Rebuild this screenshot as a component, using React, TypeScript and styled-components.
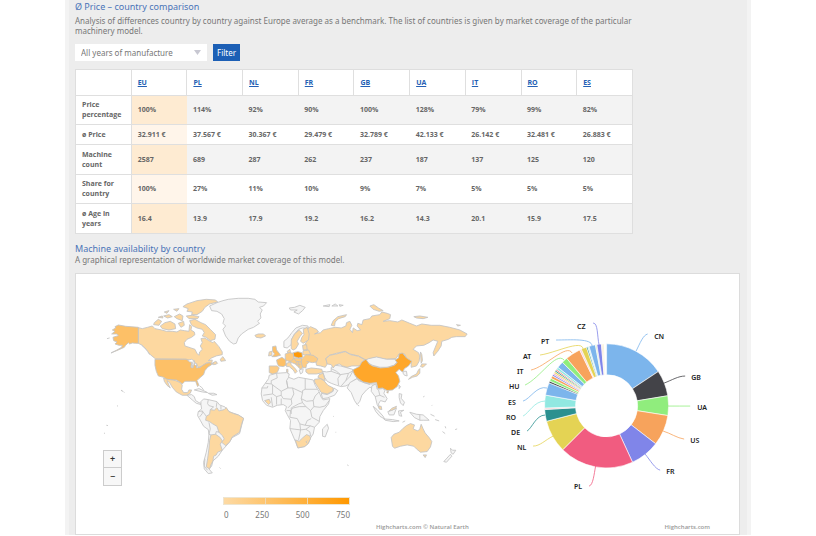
import React from "react";
import styled, { createGlobalStyle } from "styled-components";

const GlobalStyle = createGlobalStyle`
  * { box-sizing: border-box; }
  body {
    margin: 0;
    background: #fff;
    color: #777;
    font-family: "Noto Sans", "Open Sans", sans-serif;
    font-size: 8px;
    line-height: 10px;
  }
`;

const Page = styled.main`
  max-width: 686px;
  margin: 0 auto;
  padding: 0 7px 0 6px;
  background: #ededed;
  border-left: 4px solid #f3f3f3;
  border-right: 4px solid #f3f3f3;
`;

const Section = styled.section`
  display: flow-root;

  & + & { margin-top: 8px; }
`;

const Title = styled.h2`
  margin: 0;
  color: #4a74b8;
  font-size: 9px;
  font-weight: 400;
  line-height: 13px;
`;

const Lead = styled.p<{ $gap: number }>`
  margin: ${(p) => p.$gap}px 0 0;
  max-width: 566px;
`;

const Filters = styled.form`
  display: flex;
  gap: 6px;
  margin: 8px 0;
`;

const SelectBox = styled.label`
  position: relative;
  width: 132px;
  height: 17px;
`;

const YearSelect = styled.select`
  appearance: none;
  width: 100%;
  height: 100%;
  padding: 0 20px 0 6px;
  border: 0;
  border-radius: 0;
  background: #fff;
  color: #777;
  font: inherit;
`;

const Arrow = styled.svg`
  position: absolute;
  right: 6px;
  top: 6px;
  width: 7px;
  height: 5px;
  pointer-events: none;
`;

const FilterButton = styled.button`
  padding: 0 4px;
  border: 0;
  background: #1c5fb5;
  color: #fff;
  font: inherit;
`;

const Table = styled.table`
  width: 558px;
  max-width: 100%;
  table-layout: fixed;
  border-collapse: collapse;
  border: 1px solid #dedede;
  background: #fff;
  color: #666;
  font-family: "Open Sans", "Noto Sans", sans-serif;
  font-size: 7px;
  font-weight: 700;
`;

const Row = styled.tr<{ $h: number; $shaded?: boolean }>`
  height: ${(p) => p.$h}px;
  border-bottom: 1px solid #dfdfdf;
  background: ${(p) => (p.$shaded ? "#f3f3f3" : "#fff")};
`;

const HeadCell = styled.th`
  padding: 0 6px;
  border-right: 1px solid #dfdfdf;
  text-align: left;
`;

const RowHead = styled(HeadCell)`
  background: #fff;
`;

const Cell = styled.td<{ $tint?: string }>`
  padding: 0 0 0 6px;
  white-space: nowrap;
  background: ${(p) => p.$tint ?? "transparent"};
`;

const CountryLink = styled.a`
  color: #2460b4;
`;

const Charts = styled.div`
  display: grid;
  grid-template-columns: 3fr 2fr;
  min-height: 262px;
  margin-top: 8px;
  border: 1px solid #dcdcdc;
  background: #fff;
`;

const ChartColumn = styled.figure<{ $top: number; $right: number }>`
  position: relative;
  display: flex;
  flex-direction: column;
  margin: 0;
  padding: ${(p) => p.$top}px 0 2px;
  min-width: 0;

  figcaption {
    margin-top: auto;
    padding-right: ${(p) => p.$right}px;
    text-align: right;
    color: #999;
    font-family: "Open Sans", sans-serif;
    font-size: 6px;
    font-weight: 600;
  }
`;

const Drawing = styled.svg`
  display: block;
  width: 100%;
  height: auto;
`;

const ZoomControls = styled.div`
  position: absolute;
  left: 27px;
  bottom: 48px;
  display: grid;
  width: 19px;
`;

const ZoomButton = styled.button`
  height: 18px;
  padding: 0;
  border: 1px solid #ccc;
  background: #f7f7f7;
  color: #333;
  font: 600 9px/10px "Noto Sans", sans-serif;
  & + & { border-top: 0; }
`;

const Legend = styled.div`
  width: 127px;
  margin: 13px 0 0 147px;
`;

const LegendBar = styled.div`
  height: 8px;
  border: 1px solid #eee5d0;
  background:
    linear-gradient(90deg, transparent 41px, #eed9b5 41px, #eed9b5 42px, transparent 42px, transparent 83px, #eed9b5 83px, #eed9b5 84px, transparent 84px),
    linear-gradient(90deg, #fddaa4, #ff9800);
`;

const LegendScale = styled.div`
  display: flex;
  justify-content: space-between;
  margin-top: 5px;
  padding-left: 1px;
  font-size: 8px;
`;

const countries = ["EU", "PL", "NL", "FR", "GB", "UA", "IT", "RO", "ES"];

const rows = [
  { name: "Price percentage", h: 29, values: ["100%", "114%", "92%", "90%", "100%", "128%", "79%", "99%", "82%"] },
  { name: "ø Price", h: 20, values: ["32.911 €", "37.567 €", "30.367 €", "29.479 €", "32.789 €", "42.133 €", "26.142 €", "32.481 €", "26.883 €"] },
  { name: "Machine count", h: 30, values: ["2587", "689", "287", "262", "237", "187", "137", "125", "120"] },
  { name: "Share for country", h: 29, values: ["100%", "27%", "11%", "10%", "9%", "7%", "5%", "5%", "5%"] },
  { name: "ø Age in years", h: 30, values: ["16.4", "13.9", "17.9", "19.2", "16.2", "14.3", "20.1", "15.9", "17.5"] },
];

const NONE = "#f5f5f5";
const LOW = "#fdd8a0";
const SOME = "#fdcc84";
const MID = "#fdc067";
const HIGH = "#ffa72a";
const TOP = "#ff9a08";

type Shape = [fill: string, d: string];

const northAmerica: Shape[] = [
  [LOW, "M130 131 142 134 158 130 172 126 180 134 200 138 214 142 232 142 246 144 256 138 268 140 282 142 284 122 290 128 288 138 298 144 300 152 290 160 276 166 268 176 270 186 288 192 300 196 306 208 312 214 314 204 322 196 316 186 322 176 318 164 330 162 342 170 354 176 358 172 372 188 382 204 382 212 364 216 350 222 340 230 352 228 350 240 366 234 356 242 344 238 336 236 322 246 310 250 304 240 296 232 282 230 274 226 182 225 166 212 152 196 142 184 130 178Z"],
  [MID, "M52 138 62 132 60 128 70 123 92 127 130 130 130 178 122 178 112 177 104 180 100 176 92 184 88 190 70 198 48 207 66 198 80 190 82 184 72 184 60 180 66 174 56 170 54 160 70 155 66 150 50 150 60 142Z"],
  [MID, "M180 226 274 226 284 230 290 236 288 250 294 252 298 238 306 242 304 252 316 250 324 244 334 238 346 236 350 242 338 250 330 260 326 272 312 284 306 290 312 304 308 308 302 292 286 292 270 292 262 300 254 294 244 288 230 288 214 286 206 280 190 276 184 262 180 244Z"],
  ["#fff", "M278 229 290 226 300 232 292 235 284 234Z M290 238 294 238 292 251 289 250Z M298 236 306 240 304 247 299 242Z"],
  [LOW, "M206 282 216 286 232 288 242 290 256 296 262 304 260 316 266 326 278 326 282 318 290 318 286 328 276 334 262 334 244 324 232 310 224 296 216 290 222 304 226 312 216 304 208 292Z"],
  [NONE, "M276 334 290 332 298 338 302 350 312 356 322 360 318 362 304 358 292 348Z M298 318 312 314 330 322 338 326 322 324Z M340 328 356 328 366 332 352 334Z M314 306 320 310 326 318"],
  [LOW, "M376 226 384 218 392 230 378 232Z M352 238 362 232 368 238 360 242Z"],
  [LOW, "M284 110 300 106 318 116 332 122 346 136 362 152 360 166 346 170 334 160 322 156 328 146 322 136 306 132 290 124Z"],
  [LOW, "M196 126 210 116 226 112 240 120 242 134 222 138 202 134Z M178 116 190 106 200 112 192 124 176 122Z"],
  [LOW, "M264 68 276 60 288 56 306 50 334 46 362 48 368 54 344 60 330 70 322 82 306 92 290 92 292 84 276 82 280 74Z M274 96 292 94 312 98 308 104 282 104Z"],
  [LOW, "M206 96 222 92 232 98 218 102Z M236 76 252 74 246 82Z M238 98 254 90 264 96 262 110 246 104Z M250 118 266 112 268 124 258 130Z M208 84 222 80 216 88Z M190 100 202 96 204 102Z"],
  [NONE, "M344 66 366 56 384 50 400 46 430 43 460 43 480 46 490 54 515 56 506 66 494 70 502 78 496 90 498 102 488 112 494 118 476 130 460 136 440 150 430 162 424 178 416 180 404 172 392 156 384 136 392 126 384 118 388 104 380 90 366 82 350 80Z"],
  [LOW, "M480 154 490 150 506 150 512 156 498 162 484 160Z"],
  [NONE, "M78 320 82 320M86 323 88 326M140 184 150 192 158 202 164 212M36 164 44 162"],
];

const southAmerica: Shape[] = [
  [NONE, "M318 68 326 60 340 62 366 68 374 78 390 84 402 98 430 108 446 118 440 140 434 164 412 176 400 194 382 214 370 232 354 246 350 262 342 270 352 282 340 284 328 270 326 250 334 220 340 190 342 166 340 152 326 142 316 124 308 110 310 98 320 90 318 76Z"],
  [LOW, "M346 92 358 94 366 86 372 96 388 92 394 86 402 98 416 104 430 108 446 118 440 136 434 160 412 174 404 190 392 200 380 190 388 180 382 170 372 160 366 142 352 134 344 128 332 124 334 112 344 106Z"],
  [LOW, "M348 168 362 166 376 176 382 186 376 196 382 214 368 220 364 228 356 232 354 246 348 258 344 270 334 264 338 240 342 210 344 184Z"],
  ["none", "M340 62 338 74 342 80 356 84 346 92M366 70 364 84M378 80 378 92M310 98 322 96 334 112M314 114 322 104 322 96M342 130 346 150 342 166 348 168M362 166 364 158 374 160M330 240 328 262 338 274M374 266 377 269M34 139 39 140M27 163 30 163M66 80 69 82M79 34 84 38"],
];

const eurasia: Shape[] = [
  [NONE, "M158 262 170 264 184 262 184 250 196 244 212 246 248 256 256 274 262 284 250 290 240 300 228 306 214 308 200 304 184 298 172 292 164 280Z"],
  [NONE, "M154 328 172 332 190 322 192 312 204 320 194 334 172 342 158 344Z"],
  [NONE, "M240 296 262 284 282 296 300 300 318 300 314 316 300 310 290 318 276 334 270 352 262 362 254 350 244 326 232 312Z"],
  [NONE, "M306 306 318 300 322 316 338 314 346 318 342 328 352 344 346 354 332 350 326 360 330 376 322 362 316 338 304 322Z"],
  [LOW, "M110 136 122 128 140 136 146 144 134 150 152 146 160 138 176 134 196 130 214 132 228 126 230 116 240 112 246 124 240 136 248 146 250 132 262 140 272 138 262 126 264 118 276 122 280 108 300 104 306 96 330 92 336 84 352 88 362 92 360 104 340 112 360 110 384 114 396 108 420 118 440 126 456 120 484 124 510 124 540 130 570 138 592 150 586 158 560 158 546 160 536 166 516 172 514 186 504 202 492 216 490 206 498 186 504 172 490 168 478 176 462 184 440 186 430 196 446 206 450 216 448 232 440 246 424 250 424 232 412 226 404 210 388 210 378 224 350 226 320 220 296 226 288 228 266 216 240 210 226 202 200 208 178 214 168 224 172 240 166 250 152 246 140 244 138 234 142 222 120 212 110 200 104 184 112 170 116 156Z"],
  [LOW, "M184 124 190 110 204 98 230 92 226 98 206 104 196 114 194 126Z M300 66 312 62 326 72 340 80 328 82 310 76Z M432 98 450 96 474 100 460 104 440 102Z M560 122 572 124 564 126Z M452 204 456 212 458 230 454 238Z"],
  [NONE, "M58 72 74 70 90 64 106 70 98 80 86 90 72 84 82 78 62 78Z M160 66 180 62 178 68Z M186 66 196 60 204 66Z M208 62 220 64 210 67Z"],
  [NONE, "M42 190 42 172 54 162 66 146 78 132 98 124 114 126 116 134 98 132 86 136 74 150 66 164 64 182 52 192Z"],
  [LOW, "M64 194 64 168 74 150 88 138 98 148 90 158 82 172 86 180 78 194 70 198Z"],
  [LOW, "M100 136 112 130 118 150 116 168 100 178 92 172 96 160 102 152Z"],
  [LOW, "M98 184 110 182 112 198 100 198Z M100 200 116 198 122 210 112 214 98 212Z M52 202 60 196 62 206 54 208Z"],
  [SOME, "M56 232 72 222 96 224 108 212 130 214 144 224 140 234 128 236 118 234 110 242 108 252 98 250 92 256 84 248 76 240 66 236Z"],
  ["none", "M72 222 78 232 94 234 96 224M76 240 84 232M94 234 98 250M110 232 118 234M78 240 92 242M86 234 88 250"],
  [SOME, "M46 210 58 206 70 208 72 222 64 232 48 230 46 220Z"],
  [LOW, "M50 238 62 234 64 242 76 254 82 262 76 268 70 258 58 248 50 248Z M50 256 54 256 54 266 50 264Z"],
  [MID, "M8 188 18 186 20 198 28 208 32 214 16 218 6 218 14 210 8 202Z"],
  [LOW, "M-4 216-2 204 6 202 6 214Z"],
  [MID, "M20 228 36 220 48 228 48 244 40 248 26 246 22 238Z"],
  [SOME, "M-2 246 22 246 28 252 22 266 8 270-2 266Z"],
  [NONE, "M88 258 100 254 98 266 92 270Z"],
  [TOP, "M70 206 84 203 96 206 98 220 86 222 72 218Z"],
  [LOW, "M108 256 124 252 142 254 156 256 158 266 140 270 116 270 108 264Z M148 272 160 268 166 290 152 284 144 280Z"],
  [LOW, "M134 286 152 284 162 290 174 304 190 312 188 322 172 330 154 326 144 310 134 294Z"],
  [LOW, "M168 224 180 214 200 210 226 203 242 212 266 217 286 228 278 236 268 246 246 246 232 250 218 246 208 240 196 244 190 252 184 242 172 240Z"],
  [NONE, "M288 228 296 224 320 219 350 226 376 226 382 234 372 244 352 250 330 250 308 244 296 238Z"],
  [HIGH, "M248 258 268 248 276 234 288 226 298 240 308 246 332 252 356 250 374 244 382 236 376 228 386 222 388 210 398 207 410 222 426 232 416 246 404 254 398 264 388 256 378 266 386 276 390 292 382 308 368 318 352 320 338 312 324 314 320 296 300 298 280 294 262 282 254 272Z M350 324 356 322 354 328Z"],
  [LOW, "M456 240 470 240 460 250 452 248Z M450 254 450 268 442 276 428 280 416 286 424 278 440 270 446 258Z"],
  [NONE, "M400 262 410 262 412 276 404 274 400 268Z M388 304 392 308 388 314Z M264 364 268 366"],
  ["none", "M206 304 204 284 212 272 236 268 250 260M212 272 184 262M236 268 228 290 214 306M250 260 240 278 228 290M184 254 200 262 212 272M262 284 266 290 300 302M326 318 330 334 344 340M316 338 330 334"],
];

const africa: Shape[] = [
  [NONE, "M-2 274 20 268 50 266 58 270 56 280 72 286 86 280 108 284 130 288 136 304 148 324 154 340 160 348 180 344 176 360 160 380 150 398 148 415 134 430 130 450 122 462 116 478 104 488 84 492 78 476 66 448 60 434 62 410 52 392 46 380 50 368 40 362 22 364 8 370-10 364-22 350-26 330-24 312-14 298-4 284Z"],
  [LOW, "M76 468 88 472 98 462 110 452 120 456 122 464 114 480 104 488 84 492Z M-16 350-2 346 2 356-4 362Z"],
  ["none", "M-14 298 4 300 4 290 22 282 20 268M4 300 34 322 54 312 50 290 56 280M-24 312-8 312-6 306M8 302 8 330-20 334M8 330 20 338 34 334 34 322M50 290 54 312 68 312 98 326 98 320 106 316 106 284M106 316 142 316M68 312 72 330 64 346 40 344 34 334M98 326 94 344 98 356 86 360 64 372M64 346 66 360 54 372M94 344 110 352 130 350 136 336 148 324M130 350 132 368 150 370 166 366 178 350M132 368 122 380 126 400 148 412M98 356 108 368 122 380M50 380 62 380 70 372 88 368 108 368M62 380 60 400 82 404 90 420 106 424 112 410 124 404M60 434 92 438 90 420M92 438 90 450 86 468M92 438 108 436 122 426 134 430M108 436 120 444 122 456M106 424 122 426M20 338 20 362M34 344 34 362M4 340 8 368M64 372 64 390M112 470 108 474 112 478"],
  [NONE, "M158 435 172 421 176 433 166 459 158 457Z"],
];

const oceania: Shape[] = [
  [NONE, "M310 82 322 92 340 112 344 120 330 112 318 98Z M342 120 368 122 388 126 370 128 346 124Z M354 98 366 94 380 88 372 108 358 108Z M386 96 402 94 392 100 396 112 388 110Z M388 44 396 46 394 58 404 70 400 80 392 72 388 56Z M420 100 440 106 460 108 478 124 462 124 450 124 434 116Z M450 108 450 124"],
  [LOW, "M326 82 334 82 336 92 328 90Z M358 96 366 88 380 82 378 88 366 94Z"],
  [LOW, "M364 176 372 166 388 160 400 148 410 140 422 134 434 138 430 150 444 156 450 150 454 136 460 150 466 162 478 176 486 188 482 204 472 218 452 220 440 210 432 202 412 198 392 202 374 208 368 202Z M460 228 470 228 466 236Z"],
  [NONE, "M542 208 548 214 558 214 550 226 544 222Z M542 226 546 232 530 250 522 248Z"],
  ["none", "M482 106 494 112M496 122 508 126M526 142 528 148M518 158 526 164M556 152 562 150M232 258 236 260M190 112 192 113M197 160 199 160M460 54 464 52M486 80 488 78M398 130 406 126"],
];

const regions = [
  { id: "north-america", x: 0, y: 0, shapes: northAmerica },
  { id: "south-america", x: 0, y: 285, shapes: southAmerica },
  { id: "africa", x: 525, y: 0, shapes: africa },
  { id: "eurasia", x: 525, y: 0, shapes: eurasia },
  { id: "oceania", x: 525, y: 285, shapes: oceania },
];

const WorldMap = () => (
  <Drawing viewBox="-57 0 1194 600" role="img" aria-label="World map">
    {regions.map((r) => (
      <g key={r.id} transform={`translate(${r.x} ${r.y})`} stroke="#c4c4c4" strokeWidth="2.6" strokeLinejoin="round">
        {r.shapes.map(([fill, d]) => (
          <path key={d} d={d} fill={fill} />
        ))}
      </g>
    ))}
  </Drawing>
);

const CX = 606.5;
const CY = 406.8;

const slices: [end: number, color: string][] = [
  [56.4, "#7cb5ec"], [80.6, "#434348"], [99, "#90ed7d"], [127.7, "#f7a35c"], [155.3, "#8085e9"],
  [225, "#f15c80"], [255.6, "#e4d354"], [266.6, "#2b908f"], [268, "#f7c8cc"], [280, "#91e8e1"],
  [291.8, "#7cb5ec"], [293.6, "#434348"], [296.4, "#90ed7d"], [299, "#f7a35c"], [300.6, "#8085e9"],
  [302, "#f19cc0"], [303.6, "#e4d354"], [305, "#2b908f"], [306.2, "#f45b5b"], [308.4, "#91e8e1"],
  [314.6, "#7cb5ec"], [320, "#90ed7d"], [334.3, "#f7a35c"], [336, "#f9cfd4"], [341, "#e4d354"],
  [342.3, "#2b908f"], [343.6, "#c4ece8"], [349.6, "#7cb5ec"], [351, "#dceec8"], [355.2, "#8085e9"],
  [356.4, "#f9d9c4"], [357.4, "#f3eab8"],
];

const point = (angle: number, r: number) => {
  const a = (angle * Math.PI) / 180;
  return `${(CX + r * Math.sin(a)).toFixed(2)} ${(CY - r * Math.cos(a)).toFixed(2)}`;
};

const arc = (from: number, to: number) =>
  `M${point(from, 62)}A62 62 0 0 1 ${point(to, 62)}L${point(to, 31)}A31 31 0 0 0 ${point(from, 31)}Z`;

const labels: { t: string; x: number; y: number; c: string; d: string }[] = [
  { t: "CN", x: 654, y: 340, c: "#7cb5ec", d: "M647.5 335C643 336 640 344 636 352" },
  { t: "GB", x: 691, y: 381, c: "#434348", d: "M685 377C678 377 672 381 664 384" },
  { t: "UA", x: 697, y: 411, c: "#90ed7d", d: "M690 407C683 407 676 407 668 407" },
  { t: "US", x: 690, y: 444, c: "#f7a35c", d: "M684 440C677 439 670 434 663 432" },
  { t: "FR", x: 666, y: 475, c: "#8085e9", d: "M660 471C655 470 650 461 645 455" },
  { t: "PL", x: 574, y: 490, c: "#f15c80", d: "M589 487C593 486 594 475 595.5 467" },
  { t: "NL", x: 517, y: 451, c: "#e4d354", d: "M533 447C540 447 545 441 553 437" },
  { t: "DE", x: 511, y: 436, c: "#2b908f", d: "M527 432C532 429 536 416 545 416" },
  { t: "RO", x: 506, y: 421, c: "#91e8e1", d: "M523 417C529 414 534 402 545 402" },
  { t: "ES", x: 508, y: 406, c: "#7cb5ec", d: "M523 402C530 400 537 386 547 389" },
  { t: "HU", x: 509, y: 390, c: "#90ed7d", d: "M525 386C540 379 556 352 564 361" },
  { t: "IT", x: 517, y: 375, c: "#f7a35c", d: "M531 371C545 368 567 344 572 354" },
  { t: "AT", x: 523, y: 360, c: "#e4d354", d: "M540 356C555 354 582 340 583 350" },
  { t: "PT", x: 541, y: 345, c: "#7cb5ec", d: "M556 341C570 341 592 339 592 347" },
  { t: "CZ", x: 577, y: 330, c: "#8085e9", d: "M593 324C598 324 597 337 599 346" },
];

const Donut = () => (
  <Drawing viewBox="474 315 265 200" role="img" aria-label="Share of machines by country">
    <g stroke="#fff" strokeWidth="0.6">
      {slices.map(([end, color], i) => (
        <path key={end} d={arc(i ? slices[i - 1][0] : 0, end)} fill={color} />
      ))}
    </g>
    {labels.map((l) => (
      <g key={l.t}>
        <path d={l.d} fill="none" stroke={l.c} strokeWidth="0.8" />
        <text x={l.x} y={l.y} fontSize="7" fontWeight="600" fill="#222">{l.t}</text>
      </g>
    ))}
  </Drawing>
);

export default function App() {
  return (
    <>
      <GlobalStyle />
      <Page>
        <Section>
          <Title>Ø Price – country comparison</Title>
          <Lead $gap={3}>
            Analysis of differences country by country against Europe average as a benchmark. The list of countries is
            given by market coverage of the particular machinery model.
          </Lead>
          <Filters onSubmit={(e) => e.preventDefault()}>
            <SelectBox>
              <YearSelect aria-label="Year of manufacture">
                <option>All years of manufacture</option>
              </YearSelect>
              <Arrow viewBox="0 0 7 5"><path d="M0 0h7l-3.5 5z" fill="#c8c8d2" /></Arrow>
            </SelectBox>
            <FilterButton type="submit">Filter</FilterButton>
          </Filters>
          <Table>
            <thead>
              <Row $h={26}>
                <HeadCell as="td" />
                {countries.map((c) => (
                  <HeadCell key={c} scope="col"><CountryLink href={`#${c}`}>{c}</CountryLink></HeadCell>
                ))}
              </Row>
            </thead>
            <tbody>
              {rows.map((r, i) => (
                <Row key={r.name} $h={r.h} $shaded={i % 2 === 0}>
                  <RowHead scope="row">{r.name}</RowHead>
                  {r.values.map((v, j) => (
                    <Cell key={countries[j]} $tint={j ? undefined : i % 2 ? "#fff5ea" : "#feebd2"}>{v}</Cell>
                  ))}
                </Row>
              ))}
            </tbody>
          </Table>
        </Section>
        <Section>
          <Title>Machine availability by country</Title>
          <Lead $gap={0}>A graphical representation of worldwide market coverage of this model.</Lead>
          <Charts>
            <ChartColumn $top={10} $right={5}>
              <WorldMap />
              <ZoomControls>
                <ZoomButton type="button" aria-label="Zoom in">+</ZoomButton>
                <ZoomButton type="button" aria-label="Zoom out">−</ZoomButton>
              </ZoomControls>
              <Legend>
                <LegendBar />
                <LegendScale><span>0</span><span>250</span><span>500</span><span>750</span></LegendScale>
              </Legend>
              <figcaption>Highcharts.com © Natural Earth</figcaption>
            </ChartColumn>
            <ChartColumn $top={40} $right={29}>
              <Donut />
              <figcaption>Highcharts.com</figcaption>
            </ChartColumn>
          </Charts>
        </Section>
      </Page>
    </>
  );
}
